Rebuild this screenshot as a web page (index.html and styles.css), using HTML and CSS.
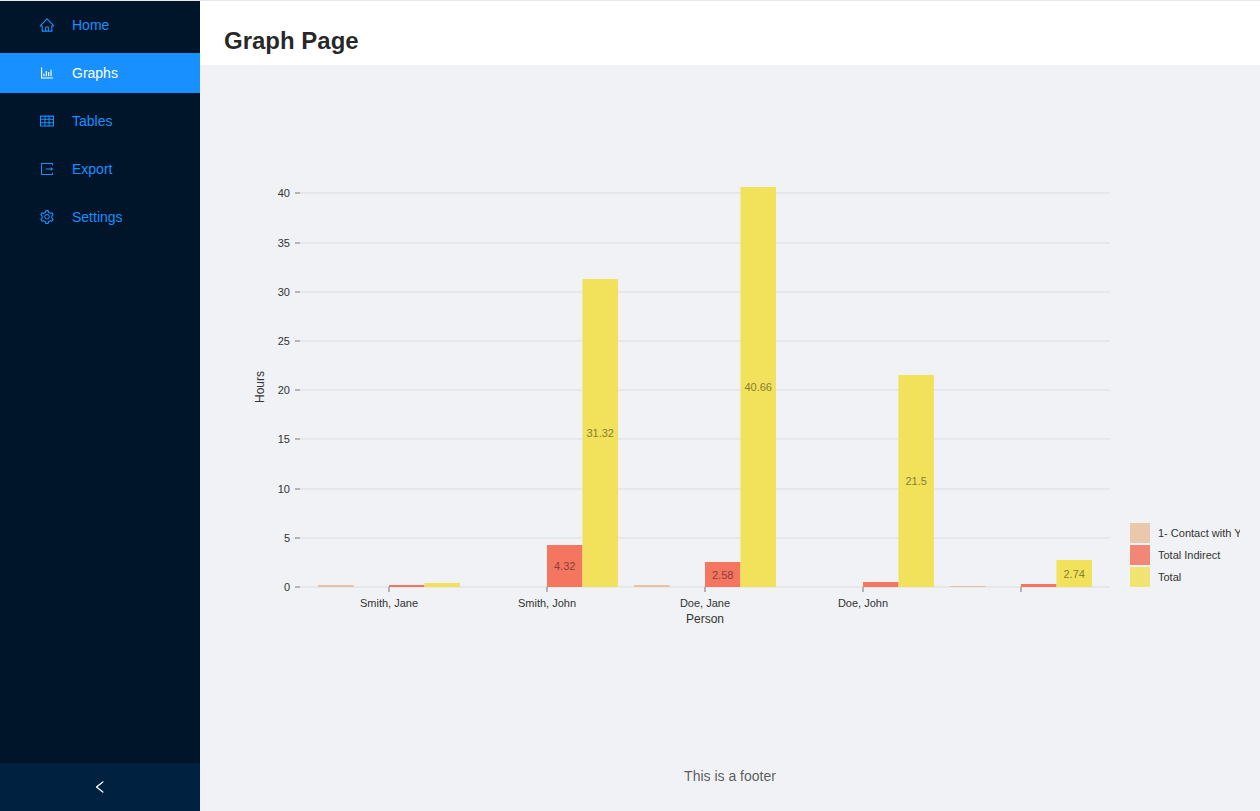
FILE: index.html
```html
<!DOCTYPE html>
<html lang="en">
<head>
<meta charset="utf-8">
<meta name="viewport" content="width=device-width, initial-scale=1">
<title>Graph Page</title>
<link rel="stylesheet" href="styles.css">
</head>
<body>
<div class="layout">
  <aside class="sider">
    <nav class="menu" aria-label="Main">
      <a class="menu-item" href="#home">
        <svg class="icon" viewBox="64 64 896 896" aria-hidden="true"><path d="M946.5 505L560.1 118.8l-25.9-25.9a31.5 31.5 0 00-44.4 0L77.5 505a63.9 63.9 0 00-18.8 46c.4 35.2 29.7 63.3 64.9 63.3h42.5V940h691.8V614.3h43.4c17.1 0 33.2-6.7 45.3-18.8a63.6 63.6 0 0018.7-45.3c0-17-6.7-33.1-18.8-45.2zM568 868H456V664h112v204zm217.9-325.7V868H632V640c0-22.1-17.9-40-40-40H432c-22.1 0-40 17.9-40 40v228H238.1V542.3h-96l370-369.7 23.1 23.1L882 542.3h-96.1z"/></svg>
        <span>Home</span>
      </a>
      <a class="menu-item menu-item-selected" href="#graphs" aria-current="page">
        <svg class="icon" viewBox="64 64 896 896" aria-hidden="true"><path d="M888 792H200V168c0-4.400-3.600-8-8-8h-56c-4.400 0-8 3.600-8 8v688c0 4.400 3.600 8 8 8h752c4.400 0 8-3.600 8-8v-56c0-4.400-3.600-8-8-8zm-600-80h56c4.400 0 8-3.600 8-8V560c0-4.400-3.600-8-8-8h-56c-4.400 0-8 3.600-8 8v144c0 4.400 3.600 8 8 8zm152 0h56c4.400 0 8-3.600 8-8V384c0-4.400-3.600-8-8-8h-56c-4.400 0-8 3.600-8 8v320c0 4.400 3.600 8 8 8zm152 0h56c4.400 0 8-3.600 8-8V462c0-4.400-3.600-8-8-8h-56c-4.400 0-8 3.600-8 8v242c0 4.400 3.600 8 8 8zm152 0h56c4.400 0 8-3.600 8-8V304c0-4.400-3.600-8-8-8h-56c-4.400 0-8 3.600-8 8v400c0 4.400 3.600 8 8 8z"/></svg>
        <span>Graphs</span>
      </a>
      <a class="menu-item" href="#tables">
        <svg class="icon" viewBox="64 64 896 896" aria-hidden="true"><path d="M928 160H96c-17.700 0-32 14.300-32 32v640c0 17.700 14.300 32 32 32h832c17.700 0 32-14.300 32-32V192c0-17.700-14.300-32-32-32zm-40 208H676V232h212v136zm0 224H676V432h212v160zM412 432h200v160H412V432zm200-64H412V232h200v136zm-476 64h212v160H136V432zm0-200h212v136H136V232zm0 424h212v136H136V656zm276 0h200v136H412V656zm476 136H676V656h212v136z"/></svg>
        <span>Tables</span>
      </a>
      <a class="menu-item" href="#export">
        <svg class="icon" viewBox="64 64 896 896" aria-hidden="true"><path d="M888.3 757.4h-53.8c-4.2 0-7.7 3.5-7.7 7.7v61.8H197.1V197.1h629.8v61.8c0 4.2 3.5 7.7 7.7 7.7h53.8c4.2 0 7.7-3.4 7.7-7.700V158.7c0-17-13.7-30.7-30.7-30.7H158.7c-17 0-30.7 13.7-30.7 30.7v706.6c0 17 13.7 30.7 30.7 30.7h706.6c17 0 30.7-13.7 30.7-30.7V765.1c0-4.3-3.5-7.7-7.7-7.7zm18.6-251.7L765 393.7c-5.3-4.2-13-.4-13 6.3v76H438c-4.4 0-8 3.6-8 8v56c0 4.4 3.6 8 8 8h314v76c0 6.7 7.8 10.5 13 6.3l141.9-112a8 8 0 000-12.6z"/></svg>
        <span>Export</span>
      </a>
      <a class="menu-item" href="#settings">
        <svg class="icon" viewBox="64 64 896 896" aria-hidden="true"><path d="M924.8 625.7l-65.5-56c3.1-19 4.7-38.4 4.7-57.8s-1.6-38.8-4.7-57.8l65.5-56a32.03 32.03 0 009.3-35.2l-.9-2.6a443.74 443.74 0 00-79.7-137.9l-1.8-2.1a32.12 32.12 0 00-35.1-9.5l-81.3 28.9c-30-24.6-63.5-44-99.7-57.6l-15.7-85a32.05 32.05 0 00-25.8-25.7l-2.7-.5c-52.1-9.4-106.9-9.4-159 0l-2.7.5a32.05 32.05 0 00-25.8 25.7l-15.8 85.4a351.86 351.86 0 00-99 57.4l-81.9-29.1a32 32 0 00-35.1 9.5l-1.8 2.1a446.02 446.02 0 00-79.7 137.9l-.9 2.6c-4.5 12.5-.8 26.5 9.3 35.2l66.3 56.6c-3.1 18.8-4.6 38-4.6 57.1 0 19.2 1.5 38.4 4.6 57.1L99 625.5a32.03 32.03 0 00-9.3 35.2l.9 2.6c18.1 50.4 44.9 96.9 79.7 137.9l1.8 2.1a32.12 32.12 0 0035.1 9.5l81.900-29.1c29.8 24.5 63.1 43.9 99 57.4l15.8 85.4a32.05 32.05 0 0025.8 25.7l2.7.5a449.4 449.4 0 00159 0l2.7-.5a32.05 32.05 0 0025.8-25.7l15.7-85a350 350 0 0099.7-57.6l81.3 28.9a32 32 0 0035.1-9.5l1.8-2.1c34.8-41.1 61.6-87.5 79.7-137.9l.9-2.6c4.5-12.3.8-26.3-9.3-35zM788.3 465.9c2.5 15.1 3.8 30.6 3.8 46.1s-1.3 31-3.8 46.1l-6.6 40.1 74.7 63.9a370.03 370.03 0 01-42.6 73.6L721 702.8l-31.4 25.8c-23.9 19.6-50.5 35-79.3 45.8l-38.1 14.3-17.9 97a377.5 377.5 0 01-85 0l-17.9-97.2-37.8-14.5c-28.5-10.8-55-26.2-78.7-45.7l-31.4-25.9-93.4 33.2c-17-22.9-31.2-47.6-42.6-73.6l75.5-64.5-6.5-40c-2.4-14.9-3.7-30.3-3.7-45.5 0-15.3 1.2-30.6 3.7-45.5l6.5-40-75.5-64.5c11.3-26.1 25.6-50.7 42.6-73.6l93.4 33.2 31.4-25.9c23.7-19.5 50.2-34.9 78.7-45.7l37.9-14.3 17.9-97.2c28.1-3.2 56.8-3.2 85 0l17.9 97 38.1 14.3c28.700 10.8 55.4 26.2 79.3 45.8l31.4 25.8 92.8-32.9c17 22.9 31.2 47.6 42.6 73.6L781.8 426l6.5 39.9zM512 326c-97.2 0-176 78.8-176 176s78.8 176 176 176 176-78.8 176-176-78.8-176-176-176zm79.2 255.2A111.6 111.6 0 01512 614c-29.9 0-58-11.7-79.2-32.8A111.6 111.6 0 01400 502c0-29.9 11.7-58 32.8-79.2C454 401.6 482.1 390 512 390c29.9 0 58 11.6 79.2 32.8A111.6 111.6 0 01624 502c0 29.9-11.7 58-32.8 79.2z"/></svg>
        <span>Settings</span>
      </a>
    </nav>
    <button class="trigger" type="button" aria-label="Collapse menu">
      <svg class="icon" viewBox="64 64 896 896" aria-hidden="true"><path d="M724 218.3V141c0-6.7-7.7-10.4-12.9-6.3L260.3 486.8a31.86 31.86 0 000 50.3l450.8 352.1c5.3 4.1 12.9.4 12.900-6.3v-77.3c0-4.9-2.3-9.6-6.1-12.6l-360-281 360-281.1c3.8-3 6.1-7.7 6.1-12.6z"/></svg>
    </button>
  </aside>
  <div class="page">
    <header class="header"><h1 class="title">Graph Page</h1></header>
    <main class="content">
      <svg class="chart" viewBox="0 0 1020 510" role="img" aria-label="Hours per person">
        <g class="grid">
          <path d="M80 56H890M80 106H890M80 155H890M80 204H890M80 253H890M80 302H890M80 352H890M80 401H890M80 450H890"/>
        </g>
        <g class="ticks">
          <path d="M75 56h5M75 106h5M75 155h5M75 204h5M75 253h5M75 302h5M75 352h5M75 401h5M75 450h5"/>
          <path d="M169 450v5M327 450v5M485 450v5M643 450v5M801 450v5"/>
        </g>
        <g class="tick-labels axis-left">
          <text x="70" y="60">40</text>
          <text x="70" y="110">35</text>
          <text x="70" y="159">30</text>
          <text x="70" y="208">25</text>
          <text x="70" y="257">20</text>
          <text x="70" y="306">15</text>
          <text x="70" y="356">10</text>
          <text x="70" y="405">5</text>
          <text x="70" y="454">0</text>
        </g>
        <g class="tick-labels axis-bottom">
          <text x="169" y="470">Smith, Jane</text>
          <text x="327" y="470">Smith, John</text>
          <text x="485" y="470">Doe, Jane</text>
          <text x="643" y="470">Doe, John</text>
        </g>
        <text class="axis-name" x="485" y="486">Person</text>
        <text class="axis-name" transform="translate(44 250) rotate(-90)">Hours</text>
        <g class="contact">
          <rect x="98" y="448" width="35.5" height="2"/>
          <rect x="414" y="448" width="35.5" height="2"/>
          <rect x="729.500" y="449" width="36" height="1"/>
        </g>
        <g class="indirect">
          <rect x="169" y="448" width="35.5" height="2"/>
          <rect x="327" y="408" width="35.5" height="42"/>
          <rect x="485" y="425" width="35.5" height="25"/>
          <rect x="643" y="445" width="35.5" height="5"/>
          <rect x="801" y="447" width="35.5" height="3"/>
        </g>
        <g class="total">
          <rect x="204.5" y="446" width="35.5" height="4"/>
          <rect x="362.5" y="142" width="35.5" height="308"/>
          <rect x="520.5" y="50" width="35.5" height="400"/>
          <rect x="678.5" y="238" width="35.5" height="212"/>
          <rect x="836.5" y="423" width="35.5" height="27"/>
        </g>
        <g class="bar-labels indirect-labels">
          <text x="344.7" y="433">4.32</text>
          <text x="502.7" y="442">2.58</text>
        </g>
        <g class="bar-labels total-labels">
          <text x="380.2" y="300">31.32</text>
          <text x="538.2" y="254">40.66</text>
          <text x="696.2" y="348">21.5</text>
          <text x="854.2" y="441">2.74</text>
        </g>
        <g class="swatches">
          <rect class="contact" x="910" y="386" width="20" height="20"/>
          <rect class="indirect" x="910" y="408" width="20" height="20"/>
          <rect class="total" x="910" y="430" width="20" height="20"/>
        </g>
        <g class="legend-labels">
          <text x="938" y="400">1- Contact with Y</text>
          <text x="938" y="422">Total Indirect</text>
          <text x="938" y="444">Total</text>
        </g>
      </svg>
    </main>
    <footer class="footer">This is a footer</footer>
  </div>
</div>
</body>
</html>
```
FILE: styles.css
```css
* {
  box-sizing: border-box;
}

body {
  margin: 0;
  color: rgba(0, 0, 0, 0.65);
  background: #f0f2f5;
  font: 14px/22px "Liberation Sans", Arial, sans-serif;
}

.layout {
  display: flex;
  min-height: 100vh;
  border-top: 1px solid #e8e8e8;
}

.sider {
  display: flex;
  flex: 0 0 200px;
  flex-direction: column;
  justify-content: space-between;
  background: #001529;
}

.menu {
  display: flex;
  flex-direction: column;
  gap: 8px;
  padding: 4px 0;
}

.menu-item {
  display: flex;
  align-items: center;
  gap: 18px;
  height: 40px;
  padding: 0 16px 0 40px;
  color: #1890ff;
  text-decoration: none;
}

.menu-item-selected {
  color: #fff;
  background: #1890ff;
}

.icon {
  display: block;
  width: 14px;
  height: 14px;
  fill: currentColor;
}

.trigger {
  display: flex;
  align-items: center;
  justify-content: center;
  height: 48px;
  padding: 0;
  border: 0;
  color: #fff;
  background: #002140;
  cursor: pointer;
}

.page {
  display: flex;
  flex: 1;
  flex-direction: column;
  min-width: 0;
}

.header {
  display: flex;
  align-items: center;
  height: 64px;
  padding: 16px 24px 0;
  background: #fff;
}

.title {
  margin: 0;
  color: rgba(0, 0, 0, 0.85);
  font-size: 24px;
  line-height: 32px;
}

.content {
  flex: 1;
  padding: 72px 20px 0;
}

.chart {
  display: block;
  width: 100%;
  overflow: hidden;
  font-size: 11px;
}

.grid {
  stroke: #ddd;
}

.ticks {
  stroke: #777;
}

.tick-labels,
.axis-name,
.legend-labels {
  fill: #333;
}

.axis-left {
  text-anchor: end;
}

.axis-bottom,
.axis-name,
.bar-labels {
  text-anchor: middle;
}

.axis-name {
  font-size: 12px;
}

.contact {
  fill: #e8c1a0;
}

.indirect {
  fill: #f47560;
}

.total {
  fill: #f1e15b;
}

.indirect-labels {
  fill: #8a4236;
}

.total-labels {
  fill: #887f33;
}

.swatches {
  opacity: 0.85;
}

.footer {
  padding: 24px 50px;
  text-align: center;
}
```
